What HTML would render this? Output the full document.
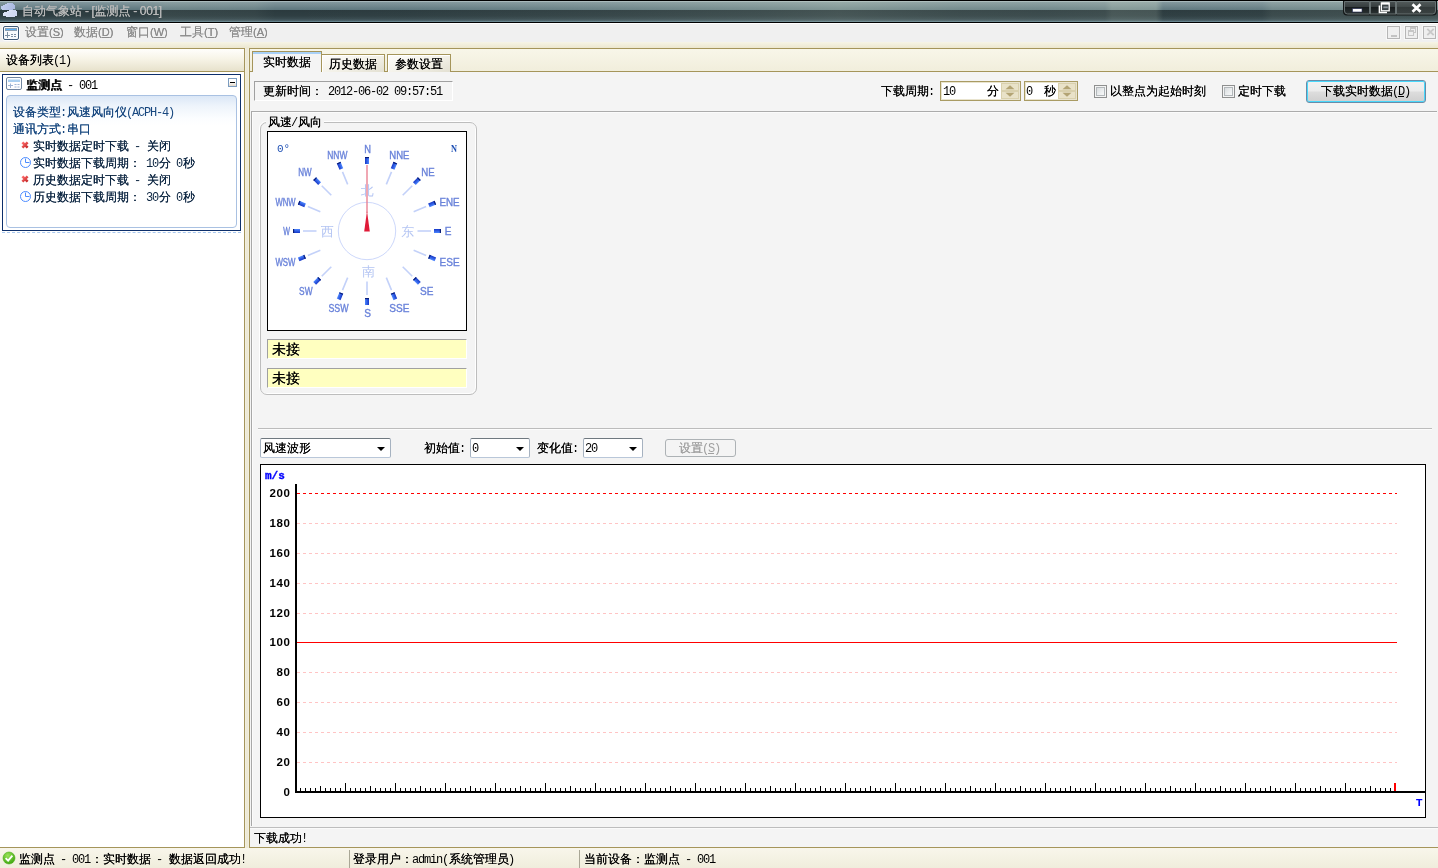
<!DOCTYPE html>
<html lang="zh-CN">
<head>
<meta charset="utf-8">
<title>自动气象站 - [监测点 - 001]</title>
<style>
*{box-sizing:border-box;margin:0;padding:0}
html,body{width:1438px;height:868px;overflow:hidden;background:#f0f0f0}
body{position:relative;will-change:transform;font-family:"Liberation Mono","WenQuanYi Zen Hei","Noto Sans CJK SC",monospace;font-size:12px;line-height:12px;color:#000}
.a{position:absolute}
.t{position:absolute;white-space:pre;height:12px;line-height:12px;margin-top:1px;text-shadow:0 0 0 currentColor}
.l{letter-spacing:-1.2px;margin-left:-1px;margin-right:1px;text-shadow:none}
.b{text-shadow:1px 0 0 currentColor,0 0 0 currentColor}
/* title bar */
#title{left:0;top:0;width:1438px;height:23px;background:
 linear-gradient(to bottom,#000 0,#000 1px,#a6b7bb 1px,#a6b7bb 2px,#82979d 2px,#5d767d 10px,#2b3a3e 10px,#2f3f43 16px,#3a4c51 19px,#4f656c 21px,#67848e 21px,#67848e 22px,#000 22px,#000 23px)}
#title .gl{left:0;top:1px;width:1438px;height:9px;background:linear-gradient(to right,rgba(200,215,195,0) 0px,rgba(200,215,195,0) 140px,rgba(200,215,195,0.13) 165px,rgba(200,215,195,0.1) 255px,rgba(200,215,195,0) 275px,rgba(200,215,195,0.02) 400px,rgba(200,215,195,0.06) 480px,rgba(200,215,195,0.12) 600px,rgba(200,215,195,0.24) 760px,rgba(200,215,195,0.32) 840px,rgba(200,215,195,0.26) 900px,rgba(200,215,195,0.2) 960px,rgba(200,215,195,0.18) 1040px,rgba(200,215,195,0.22) 1105px,rgba(200,215,195,0.36) 1112px,rgba(200,215,195,0.34) 1156px,rgba(200,215,195,0.02) 1163px,rgba(200,215,195,0.05) 1262px,rgba(200,215,195,0.18) 1272px,rgba(200,215,195,0.22) 1340px,rgba(200,215,195,0.22) 1438px)}
#title .gl2{left:0;top:10px;width:1438px;height:12px;opacity:.5;background:linear-gradient(to right,rgba(200,215,195,0) 0px,rgba(200,215,195,0) 140px,rgba(200,215,195,0.13) 165px,rgba(200,215,195,0.1) 255px,rgba(200,215,195,0) 275px,rgba(200,215,195,0.02) 400px,rgba(200,215,195,0.06) 480px,rgba(200,215,195,0.12) 600px,rgba(200,215,195,0.24) 760px,rgba(200,215,195,0.32) 840px,rgba(200,215,195,0.26) 900px,rgba(200,215,195,0.2) 960px,rgba(200,215,195,0.18) 1040px,rgba(200,215,195,0.22) 1105px,rgba(200,215,195,0.36) 1112px,rgba(200,215,195,0.34) 1156px,rgba(200,215,195,0.02) 1163px,rgba(200,215,195,0.05) 1262px,rgba(200,215,195,0.18) 1272px,rgba(200,215,195,0.22) 1340px,rgba(200,215,195,0.22) 1438px)}
#title .tx{left:22px;top:4px;color:#b9b9b9;font-family:"Liberation Sans","WenQuanYi Zen Hei","Noto Sans CJK SC",sans-serif}
#wc{left:1343px;top:1px;width:94px;height:15px}
/* menubar */
#menubar{left:0;top:23px;width:1438px;height:19px;background:#f0f0f0;border-top:1px solid #fff}
#menubar .t{top:1px;color:#8c8c8c;font-family:"Liberation Sans","WenQuanYi Zen Hei","Noto Sans CJK SC",sans-serif}
.ml{font-size:11px}
u{text-decoration:underline;text-underline-offset:1px}
.mdi{top:26px;width:13px;height:13px;border:1px solid #b6b6b6;background:#efefef;box-shadow:0 0 0 1px rgba(255,255,255,.5)}
/* dock area */
#dock{left:0;top:42px;width:1438px;height:806px;background:linear-gradient(to bottom,#f6f4e6 0,#ece7cf 6px,#f8f6e9 7px,#f1eedc 29px,#f3f0e0 30px)}
.gold{background:#a5955a}
/* left panel */
#lhead{left:0;top:49px;width:244px;height:22px;background:linear-gradient(to bottom,#fffefc 0,#f7f4e7 45%,#e7e2cc 100%)}
#llist{left:0;top:72px;width:244px;height:775px;background:#fff}
#dev{left:2px;top:74px;width:239px;height:157px;border:1px solid #0d2f6b;background:#fff}
#devin{left:3px;top:20px;width:231px;height:133px;border:1px solid #a9c1e2;border-radius:4px;background:linear-gradient(to bottom,#dbe7f6 0,#eef4fb 10px,#fbfdff 22px,#fff 30px)}
#devin .t{color:#17477f}
#devin .k{color:#0c2541}
/* right panel */
#rp{left:249px;top:49px;width:1189px;height:798px}
#rcont{left:250px;top:72px;width:1188px;height:775px;background:#f4f4f4}
.tab{top:54px;height:18px;border:1px solid #a5955a;border-bottom:none;background:linear-gradient(160deg,#fdfcfa 0,#f3f1e8 55%,#e3e0d2 100%);box-shadow:inset 1px 1px 0 #fff}
.sunk{border:1px solid;border-color:#a0a0a0 #fff #fff #a0a0a0}
.spin{top:81px;height:20px;border:1px solid #a99b63;background:#fff;box-shadow:inset 0 0 0 1px #e9e4cf}
.cb{top:85px;width:13px;height:13px;border:1px solid #8e8f8f;background:linear-gradient(135deg,#cfd3d6 0,#eef0f1 60%,#fff 100%);box-shadow:inset 0 0 0 1px #f4f4f4, inset 0 0 0 2px #b3b8bb}
.combo{top:438px;height:20px;border:1px solid;border-color:#6f787f #a6b2c0 #b9c7d9 #a6b2c0;border-radius:2px;background:#fff}
.combo:after{content:"";position:absolute;right:5px;top:8px;border:4px solid transparent;border-top:4px solid #000;border-bottom:none}
/* status */
#status{left:0;top:848px;width:1438px;height:20px;background:linear-gradient(to bottom,#f8f6eb,#f0eddc)}
</style>
</head>
<body>
<!-- TITLE BAR -->
<div id="title" class="a">
 <div class="a gl"></div><div class="a gl2"></div>
 <svg class="a" style="left:0;top:0" width="20" height="20" viewBox="0 0 20 20"><defs><linearGradient id="c1" x1="0" y1="0" x2="1" y2="1"><stop offset="0" stop-color="#cbd6f3"/><stop offset="1" stop-color="#9fb0dc"/></linearGradient><linearGradient id="c2" x1="0" y1="0" x2="1" y2="1"><stop offset="0" stop-color="#e6ebfa"/><stop offset="1" stop-color="#c6d0ee"/></linearGradient></defs><g fill="url(#c1)"><rect x="7" y="3" width="6" height="1"/><rect x="5" y="4" width="9" height="1"/><rect x="3" y="5" width="12" height="1"/><rect x="1" y="6" width="14" height="1"/><rect x="1" y="7" width="14" height="1"/><rect x="1" y="8" width="14" height="1"/><rect x="2" y="9" width="11" height="1"/></g><g fill="url(#c2)"><rect x="9" y="10" width="7" height="1"/><rect x="7" y="11" width="10" height="1"/><rect x="4" y="12" width="13" height="1"/><rect x="3" y="13" width="14" height="1"/><rect x="3" y="14" width="14" height="1"/><rect x="3" y="15" width="14" height="1"/><rect x="6" y="16" width="9" height="1"/></g></svg>
 <div class="t tx">自动气象站<span style="letter-spacing:-.4px"> - [</span>监测点<span style="letter-spacing:-.4px"> - 001]</span></div>
 <div id="wc" class="a">
  <svg class="a" style="left:0;top:0" width="94" height="15" viewBox="0 0 94 15">
   <defs><linearGradient id="wb" x1="0" y1="0" x2="0" y2="1"><stop offset="0" stop-color="#4a5253"/><stop offset=".42" stop-color="#363d3e"/><stop offset=".42" stop-color="#161b1c"/><stop offset="1" stop-color="#2b3233"/></linearGradient>
   <linearGradient id="wx" x1="0" y1="0" x2="0" y2="1"><stop offset="0" stop-color="#525a5a"/><stop offset=".42" stop-color="#424a4a"/><stop offset=".42" stop-color="#333a3a"/><stop offset="1" stop-color="#3a4141"/></linearGradient></defs>
   <path d="M0 0H94V10.5Q94 14.500 90 14.500H4Q0 14.500 0 10.5Z" fill="#141819"/>
   <path d="M1.5 0.5H26.5V13H4.5Q1.5 13 1.5 10Z" fill="url(#wb)" stroke="#687273"/>
   <rect x="27.5" y="0.5" width="25" height="12.5" fill="url(#wb)" stroke="#687273"/>
   <path d="M53.500 0.5H92.500V10Q92.500 13 89.500 13H53.500Z" fill="url(#wx)" stroke="#687273"/>
   <rect x="9.500" y="7.700" width="9.500" height="3.300" fill="#fff" stroke="#2a3158" stroke-width=".6"/>
   <rect x="38.400" y="2" width="7.800" height="7.800" fill="#3a4346" stroke="#fff" stroke-width="1.300"/>
   <rect x="38.400" y="1.600" width="7.800" height="2" fill="#fff"/>
   <rect x="40.300" y="5.400" width="4.500" height="1.800" fill="#8d959b"/>
   <path d="M36.400 4.500V11.400H44" fill="none" stroke="#fff" stroke-width="1.500"/>
   <path d="M69.500 3.300 L77.500 10.800 M77.500 3.300 L69.500 10.800" stroke="#fff" stroke-width="2.700"/>
  </svg>
</div>
</div>
<!-- MENU BAR -->
<div id="menubar" class="a">
 <svg class="a" style="left:2px;top:1px" width="18" height="16" viewBox="-1 -1 18 16">
  <rect x="-0.5" y="-0.5" width="17" height="15" rx="2.5" fill="none" stroke="#fff" stroke-opacity=".8"/>
  <rect x="0.5" y="0.5" width="15" height="13" rx="1.500" fill="#f7fafd" stroke="#3f5a78"/>
  <rect x="2.500" y="2.500" width="11" height="2" fill="#5ab0f8" stroke="#8a9fb3"/>
  <path d="M4.500 6V12M2 9.500H7" stroke="#7d8fa3" stroke-width="1"/>
  <path d="M8 8.500H10M11 8.500H13M8 10.500H10M11 10.500H13" stroke="#7d8fa3" stroke-width="1"/>
 </svg>
 <div class="t" style="left:25px">设置<span class="ml">(<u>S</u>)</span></div>
 <div class="t" style="left:74px">数据<span class="ml">(<u>D</u>)</span></div>
 <div class="t" style="left:126px">窗口<span class="ml">(<u>W</u>)</span></div>
 <div class="t" style="left:180px">工具<span class="ml">(<u>T</u>)</span></div>
 <div class="t" style="left:229px">管理<span class="ml">(<u>A</u>)</span></div>
</div>
<div class="a mdi" style="left:1387px"><div class="a" style="left:3px;top:8px;width:6px;height:2px;background:#c3c3c3"></div></div>
<div class="a mdi" style="left:1405px"><div class="a" style="left:4px;top:0;width:6px;height:6px;border:1px solid #c6c6c6;border-top-width:2px"></div><div class="a" style="left:2px;top:3px;width:6px;height:6px;border:1px solid #c6c6c6;border-top-width:2px;background:#efefef"></div></div>
<div class="a mdi" style="left:1423px"><svg class="a" style="left:0;top:0" width="11" height="11"><path d="M3.300 1.800 L9.700 8.200 M9.700 1.800 L3.300 8.200" stroke="#c9c9c9" stroke-width="1.900"/></svg></div>

<!-- DOCK BACKGROUND -->
<div id="dock" class="a"></div>
<div class="a gold" style="left:0;top:48px;width:245px;height:1px"></div>
<div class="a gold" style="left:249px;top:48px;width:1189px;height:1px"></div>
<div class="a gold" style="left:0;top:71px;width:245px;height:1px"></div>
<div class="a gold" style="left:249px;top:71px;width:1189px;height:1px"></div>

<div class="a" style="left:245px;top:48px;width:4px;height:800px;background:linear-gradient(to right,#f4f1e2,#ebe7d3 50%,#f4f1e2)"></div>
<!-- LEFT PANEL -->
<div id="lhead" class="a"><div class="t" style="left:6px;top:5px">设备列表<span class="l">(1)</span></div></div>
<div id="llist" class="a"></div>
<div class="a gold" style="left:244px;top:49px;width:1px;height:799px"></div>
<div id="dev" class="a">
 <svg class="a" style="left:3px;top:2px" width="16" height="14" viewBox="0 0 16 14">
  <rect x="0.5" y="0.5" width="15" height="12" rx="1.5" fill="#fdfeff" stroke="#71859f"/>
  <rect x="2" y="2.5" width="12" height="2.5" fill="#a9cff0"/>
  <path d="M2 8.5h5M4.5 6.5v4.5" stroke="#9fb4d4" stroke-width="1"/>
  <path d="M8.5 7.5h2M11.5 7.5h2M8.5 10h2M11.5 10h2" stroke="#9fb4d4" stroke-width="1"/>
 </svg>
 <div class="t" style="left:23px;top:4px"><span class="b">监测点</span><span class="l"> - 001</span></div>
 <div class="a" style="left:225px;top:3px;width:9px;height:9px;border:1px solid #7b9cc0;background:linear-gradient(#fff 40%,#e2d8ca)"><div class="a" style="left:1px;top:3px;width:5px;height:1px;background:#000"></div></div>
 <div id="devin" class="a">
  <div class="t" style="left:6px;top:10px">设备类型<span class="l">:</span>风速风向仪<span class="l">(ACPH-4)</span></div>
  <div class="t" style="left:6px;top:27px">通讯方式<span class="l">:</span>串口</div>
  <div class="t k" style="left:26px;top:44px">实时数据定时下载<span class="l"> - </span>关闭</div>
  <div class="t k" style="left:26px;top:61px">实时数据下载周期：<span class="l"> 10</span>分<span class="l"> 0</span>秒</div>
  <div class="t k" style="left:26px;top:78px">历史数据定时下载<span class="l"> - </span>关闭</div>
  <div class="t k" style="left:26px;top:95px">历史数据下载周期：<span class="l"> 30</span>分<span class="l"> 0</span>秒</div>
  <svg class="a" style="left:14px;top:45px" width="9" height="9"><defs><linearGradient id="xr" x1="0" y1="0" x2="1" y2="1"><stop offset="0" stop-color="#ff7070"/><stop offset="1" stop-color="#c42626"/></linearGradient></defs><path d="M1.400 1.400 L6.600 6.600 M6.600 1.400 L1.400 6.600" stroke="url(#xr)" stroke-width="2.600"/></svg>
  <svg class="a" style="left:14px;top:79px" width="9" height="9"><path d="M1.400 1.400 L6.600 6.600 M6.600 1.400 L1.400 6.600" stroke="url(#xr)" stroke-width="2.600"/></svg>
  <svg class="a" style="left:13px;top:61px" width="12" height="12"><circle cx="5.500" cy="5.500" r="5" fill="#fff" stroke="#4d8cff" stroke-width="1"/><path d="M5.500 1.500V5.500H9.500" fill="none" stroke="#4d8cff" stroke-width="1"/></svg>
  <svg class="a" style="left:13px;top:95px" width="12" height="12"><circle cx="5.500" cy="5.500" r="5" fill="#fff" stroke="#4d8cff" stroke-width="1"/><path d="M5.500 1.500V5.500H9.500" fill="none" stroke="#4d8cff" stroke-width="1"/></svg>
 </div>
</div>
<div class="a" style="left:2px;top:232px;width:239px;height:0;border-top:1px dashed #a9c8ee"></div>

<!-- RIGHT PANEL -->
<div class="a gold" style="left:249px;top:49px;width:1px;height:799px"></div>
<div id="rcont" class="a"></div>
<!--TABS-->
<div class="a tab" style="left:321px;width:64px"></div>
<div class="a tab" style="left:387px;width:64px"></div>
<div class="a" style="left:252px;top:51px;width:70px;height:21px;border:1px solid #a5955a;border-bottom:none;background:#f4f4f4;box-shadow:inset 0 2px 0 #a9d1f7"></div>
<div class="t" style="left:263px;top:56px">实时数据</div>
<div class="t" style="left:329px;top:58px">历史数据</div>
<div class="t" style="left:395px;top:58px">参数设置</div>
<!--RCONTENT-->
<div class="a sunk" style="left:254px;top:81px;width:199px;height:20px"></div>
<div class="t" style="left:263px;top:85px">更新时间：<span class="l"> 2012-06-02 09:57:51</span></div>
<div class="t" style="left:881px;top:85px">下载周期<span class="l">:</span></div>
<div class="a spin" style="left:940px;width:81px"><div class="t" style="left:3px;top:3px"><span class="l">10</span></div><div class="t" style="left:46px;top:3px">分</div></div>
<div class="a spin" style="left:1024px;width:54px"><div class="t" style="left:2px;top:3px"><span class="l">0</span></div><div class="t" style="left:19px;top:3px">秒</div></div>
<svg class="a" style="left:1001px;top:83px" width="18" height="16" viewBox="0 0 18 16"><rect width="18" height="16" fill="#ece6cf"/><rect x=".5" y=".5" width="17" height="7" fill="#e9e2c8" stroke="#d9d0ad"/><rect x=".5" y="8.5" width="17" height="7" fill="#e9e2c8" stroke="#d9d0ad"/><path d="M4.500 6.300 L9 2.200 L13.500 6.300Z M4.500 9.700 L9 13.800 L13.500 9.700Z" fill="#b3a474"/></svg>
<svg class="a" style="left:1058px;top:83px" width="18" height="16" viewBox="0 0 18 16"><rect width="18" height="16" fill="#ece6cf"/><rect x=".5" y=".5" width="17" height="7" fill="#e9e2c8" stroke="#d9d0ad"/><rect x=".5" y="8.5" width="17" height="7" fill="#e9e2c8" stroke="#d9d0ad"/><path d="M4.500 6.300 L9 2.200 L13.500 6.300Z M4.500 9.700 L9 13.800 L13.500 9.700Z" fill="#b3a474"/></svg>
<div class="a cb" style="left:1094px"></div>
<div class="t" style="left:1110px;top:85px">以整点为起始时刻</div>
<div class="a cb" style="left:1222px"></div>
<div class="t" style="left:1238px;top:85px">定时下载</div>
<div class="a" style="left:1306px;top:80px;width:120px;height:23px;border:1px solid #6a8ca8;border-radius:3px;background:linear-gradient(to bottom,#f2f2f2 0,#ebebeb 48%,#dddddd 52%,#cfcfcf 100%);box-shadow:inset 0 0 0 1px #48d8fb"></div>
<div class="t" style="left:1321px;top:85px">下载实时数据<span class="l">(<u>D</u>)</span></div>
<!-- inner sunken panel -->
<div class="a" style="left:252px;top:112px;width:1185px;height:1px;background:#fbfbfb"></div>
<div class="a" style="left:252px;top:112px;width:1px;height:714px;background:#fbfbfb"></div>
<div class="a" style="left:251px;top:111px;width:1186px;height:1px;background:#ababab"></div>
<div class="a" style="left:251px;top:111px;width:1px;height:715px;background:#a8a8a8"></div>
<div class="a" style="left:250px;top:827px;width:1188px;height:1px;background:#bdbdbd"></div>
<div class="a" style="left:250px;top:828px;width:1188px;height:1px;background:#fafafa"></div>
<div class="a" style="left:258px;top:428px;width:1174px;height:1px;background:#bcbcbc"></div>
<div class="a" style="left:258px;top:429px;width:1174px;height:1px;background:#fcfcfc"></div>
<!-- group box -->
<div class="a" style="left:259px;top:121px;width:217px;height:273px;border:1px solid #fff;border-radius:7px"></div>
<div class="a" style="left:260px;top:122px;width:217px;height:273px;border:1px solid #bdbdbd;border-radius:7px"></div>
<div class="t" style="left:266px;top:116px;background:#f4f4f4;padding:0 2px;width:58px">风速<span class="l">/</span>风向</div>
<!--COMPASS-->
<svg class="a" style="left:267px;top:131px" width="200" height="200" viewBox="0 0 200 200" font-family="'Liberation Sans','WenQuanYi Zen Hei',sans-serif"><defs><linearGradient id="mk" x1="0" y1="0" x2="1" y2="0"><stop offset="0" stop-color="#1638c8"/><stop offset="1" stop-color="#4c86ff"/></linearGradient></defs><rect x=".5" y=".5" width="199" height="199" fill="#fff" stroke="#000"/><circle cx="100" cy="100" r="28.7" fill="none" stroke="#cdd8fb" stroke-width="1"/><g transform="rotate(0 100 100)"><rect x="98" y="26" width="4" height="7" fill="url(#mk)"/><rect x="98" y="26" width="4" height="1.2" fill="#0a1e78"/></g><text x="100.5" y="22.2" text-anchor="middle" font-size="11" fill="#6a83da" stroke="#6a83da" stroke-width=".4" textLength="6.7" lengthAdjust="spacingAndGlyphs">N</text><g transform="rotate(22.5 100 100)"><line x1="100" y1="36" x2="100" y2="49.5" stroke="#c3d1f9" stroke-width="1.6"/><rect x="98" y="26" width="4" height="7" fill="url(#mk)"/><rect x="98" y="26" width="4" height="1.2" fill="#0a1e78"/></g><text x="132.4" y="27.6" text-anchor="middle" font-size="11" fill="#6a83da" stroke="#6a83da" stroke-width=".4" textLength="20.1" lengthAdjust="spacingAndGlyphs">NNE</text><g transform="rotate(45 100 100)"><line x1="100" y1="36" x2="100" y2="49.5" stroke="#c3d1f9" stroke-width="1.6"/><rect x="98" y="26" width="4" height="7" fill="url(#mk)"/><rect x="98" y="26" width="4" height="1.2" fill="#0a1e78"/></g><text x="160.9" y="45.4" text-anchor="middle" font-size="11" fill="#6a83da" stroke="#6a83da" stroke-width=".4" textLength="13.4" lengthAdjust="spacingAndGlyphs">NE</text><g transform="rotate(67.5 100 100)"><line x1="100" y1="36" x2="100" y2="49.5" stroke="#c3d1f9" stroke-width="1.6"/><rect x="98" y="26" width="4" height="7" fill="url(#mk)"/><rect x="98" y="26" width="4" height="1.2" fill="#0a1e78"/></g><text x="182.6" y="74.5" text-anchor="middle" font-size="11" fill="#6a83da" stroke="#6a83da" stroke-width=".4" textLength="20.1" lengthAdjust="spacingAndGlyphs">ENE</text><g transform="rotate(90 100 100)"><line x1="100" y1="36" x2="100" y2="49.5" stroke="#c3d1f9" stroke-width="1.6"/><rect x="98" y="26" width="4" height="7" fill="url(#mk)"/><rect x="98" y="26" width="4" height="1.2" fill="#0a1e78"/></g><text x="181.2" y="104.0" text-anchor="middle" font-size="11" fill="#6a83da" stroke="#6a83da" stroke-width=".4" textLength="6.7" lengthAdjust="spacingAndGlyphs">E</text><g transform="rotate(112.5 100 100)"><line x1="100" y1="36" x2="100" y2="49.5" stroke="#c3d1f9" stroke-width="1.6"/><rect x="98" y="26" width="4" height="7" fill="url(#mk)"/><rect x="98" y="31.8" width="4" height="1.2" fill="#0a1e78"/></g><text x="182.6" y="135.2" text-anchor="middle" font-size="11" fill="#6a83da" stroke="#6a83da" stroke-width=".4" textLength="20.1" lengthAdjust="spacingAndGlyphs">ESE</text><g transform="rotate(135 100 100)"><line x1="100" y1="36" x2="100" y2="49.5" stroke="#c3d1f9" stroke-width="1.6"/><rect x="98" y="26" width="4" height="7" fill="url(#mk)"/><rect x="98" y="31.8" width="4" height="1.2" fill="#0a1e78"/></g><text x="159.8" y="164.3" text-anchor="middle" font-size="11" fill="#6a83da" stroke="#6a83da" stroke-width=".4" textLength="13.4" lengthAdjust="spacingAndGlyphs">SE</text><g transform="rotate(157.5 100 100)"><line x1="100" y1="36" x2="100" y2="49.5" stroke="#c3d1f9" stroke-width="1.6"/><rect x="98" y="26" width="4" height="7" fill="url(#mk)"/><rect x="98" y="31.8" width="4" height="1.2" fill="#0a1e78"/></g><text x="132.4" y="181.3" text-anchor="middle" font-size="11" fill="#6a83da" stroke="#6a83da" stroke-width=".4" textLength="20.1" lengthAdjust="spacingAndGlyphs">SSE</text><g transform="rotate(180 100 100)"><line x1="100" y1="36" x2="100" y2="49.5" stroke="#c3d1f9" stroke-width="1.6"/><rect x="98" y="26" width="4" height="7" fill="url(#mk)"/><rect x="98" y="31.8" width="4" height="1.2" fill="#0a1e78"/></g><text x="100.5" y="186.2" text-anchor="middle" font-size="11" fill="#6a83da" stroke="#6a83da" stroke-width=".4" textLength="6.7" lengthAdjust="spacingAndGlyphs">S</text><g transform="rotate(202.5 100 100)"><line x1="100" y1="36" x2="100" y2="49.5" stroke="#c3d1f9" stroke-width="1.6"/><rect x="98" y="26" width="4" height="7" fill="url(#mk)"/><rect x="98" y="31.8" width="4" height="1.2" fill="#0a1e78"/></g><text x="71.5" y="181.3" text-anchor="middle" font-size="11" fill="#6a83da" stroke="#6a83da" stroke-width=".4" textLength="20.1" lengthAdjust="spacingAndGlyphs">SSW</text><g transform="rotate(225 100 100)"><line x1="100" y1="36" x2="100" y2="49.5" stroke="#c3d1f9" stroke-width="1.6"/><rect x="98" y="26" width="4" height="7" fill="url(#mk)"/><rect x="98" y="31.8" width="4" height="1.2" fill="#0a1e78"/></g><text x="38.8" y="164.3" text-anchor="middle" font-size="11" fill="#6a83da" stroke="#6a83da" stroke-width=".4" textLength="13.4" lengthAdjust="spacingAndGlyphs">SW</text><g transform="rotate(247.5 100 100)"><line x1="100" y1="36" x2="100" y2="49.5" stroke="#c3d1f9" stroke-width="1.6"/><rect x="98" y="26" width="4" height="7" fill="url(#mk)"/><rect x="98" y="31.8" width="4" height="1.2" fill="#0a1e78"/></g><text x="18.5" y="135.2" text-anchor="middle" font-size="11" fill="#6a83da" stroke="#6a83da" stroke-width=".4" textLength="20.1" lengthAdjust="spacingAndGlyphs">WSW</text><g transform="rotate(270 100 100)"><line x1="100" y1="36" x2="100" y2="49.5" stroke="#c3d1f9" stroke-width="1.6"/><rect x="98" y="26" width="4" height="7" fill="url(#mk)"/><rect x="98" y="26" width="4" height="1.2" fill="#0a1e78"/></g><text x="19.6" y="104.0" text-anchor="middle" font-size="11" fill="#6a83da" stroke="#6a83da" stroke-width=".4" textLength="6.7" lengthAdjust="spacingAndGlyphs">W</text><g transform="rotate(292.5 100 100)"><line x1="100" y1="36" x2="100" y2="49.5" stroke="#c3d1f9" stroke-width="1.6"/><rect x="98" y="26" width="4" height="7" fill="url(#mk)"/><rect x="98" y="26" width="4" height="1.2" fill="#0a1e78"/></g><text x="18.5" y="74.5" text-anchor="middle" font-size="11" fill="#6a83da" stroke="#6a83da" stroke-width=".4" textLength="20.1" lengthAdjust="spacingAndGlyphs">WNW</text><g transform="rotate(315 100 100)"><line x1="100" y1="36" x2="100" y2="49.5" stroke="#c3d1f9" stroke-width="1.6"/><rect x="98" y="26" width="4" height="7" fill="url(#mk)"/><rect x="98" y="26" width="4" height="1.2" fill="#0a1e78"/></g><text x="38.0" y="45.4" text-anchor="middle" font-size="11" fill="#6a83da" stroke="#6a83da" stroke-width=".4" textLength="13.4" lengthAdjust="spacingAndGlyphs">NW</text><g transform="rotate(337.5 100 100)"><line x1="100" y1="36" x2="100" y2="49.5" stroke="#c3d1f9" stroke-width="1.6"/><rect x="98" y="26" width="4" height="7" fill="url(#mk)"/><rect x="98" y="26" width="4" height="1.2" fill="#0a1e78"/></g><text x="70.3" y="27.6" text-anchor="middle" font-size="11" fill="#6a83da" stroke="#6a83da" stroke-width=".4" textLength="20.1" lengthAdjust="spacingAndGlyphs">NNW</text><text x="100.2" y="64" text-anchor="middle" font-size="13" fill="#b4c5f3">北</text><text x="101.4" y="145.3" text-anchor="middle" font-size="13" fill="#b4c5f3">南</text><text x="140.8" y="105.2" text-anchor="middle" font-size="13" fill="#b4c5f3">东</text><text x="60.3" y="105.2" text-anchor="middle" font-size="13" fill="#b4c5f3">西</text><line x1="100" y1="34" x2="100" y2="82" stroke="#e8788a" stroke-width="1.3"/><path d="M100 80 L102.8 100.5 L97.2 100.5 Z" fill="#e01a38"/><text x="10" y="21" font-size="11" fill="#1d4fb4" font-family="'Liberation Mono',monospace">0°</text><text x="184" y="20.6" font-size="10" font-weight="bold" fill="#1d4fb4" font-family="'Liberation Serif',serif" textLength="6" lengthAdjust="spacingAndGlyphs">N</text></svg>
<div class="a sunk" style="left:267px;top:339px;width:200px;height:20px;background:#ffffc0"></div>
<div class="t" style="left:272px;top:342px;font-size:14px;height:14px;line-height:14px">未接</div>
<div class="a sunk" style="left:267px;top:368px;width:200px;height:20px;background:#ffffc0"></div>
<div class="t" style="left:272px;top:371px;font-size:14px;height:14px;line-height:14px">未接</div>
<!-- combos -->
<div class="a combo" style="left:260px;width:131px"><div class="t" style="left:2px;top:3px">风速波形</div></div>
<div class="t" style="left:424px;top:442px">初始值<span class="l">:</span></div>
<div class="a combo" style="left:470px;width:60px"><div class="t" style="left:2px;top:3px"><span class="l">0</span></div></div>
<div class="t" style="left:537px;top:442px">变化值<span class="l">:</span></div>
<div class="a combo" style="left:583px;width:60px"><div class="t" style="left:2px;top:3px"><span class="l">20</span></div></div>
<div class="a" style="left:665px;top:439px;width:71px;height:18px;border:1px solid #adb2b5;border-radius:3px;background:#f4f4f4"></div>
<div class="t" style="left:679px;top:442px;color:#a0a0a0">设置<span class="l">(<u>S</u>)</span></div>
<div class="t" style="left:254px;top:832px">下载成功<span class="l">!</span></div>
<!--CHART-->
<svg class="a" style="left:260px;top:464px" width="1166" height="354" viewBox="0 0 1166 354" shape-rendering="crispEdges"><rect x=".5" y=".5" width="1165" height="353" fill="#fff" stroke="#000"/><line x1="37" y1="29.5" x2="1137" y2="29.5" stroke="#ff0000" stroke-width="1" stroke-dasharray="3 3"/><text x="30.5" y="33" text-anchor="end" font-size="11.5" font-weight="bold" letter-spacing=".6" font-family="'Liberation Sans',sans-serif" shape-rendering="auto">200</text><line x1="37" y1="59.5" x2="1137" y2="59.5" stroke="#ffc4c4" stroke-width="1" stroke-dasharray="3 3"/><text x="30.5" y="63" text-anchor="end" font-size="11.5" font-weight="bold" letter-spacing=".6" font-family="'Liberation Sans',sans-serif" shape-rendering="auto">180</text><line x1="37" y1="89.5" x2="1137" y2="89.5" stroke="#ffc4c4" stroke-width="1" stroke-dasharray="3 3"/><text x="30.5" y="93" text-anchor="end" font-size="11.5" font-weight="bold" letter-spacing=".6" font-family="'Liberation Sans',sans-serif" shape-rendering="auto">160</text><line x1="37" y1="119.5" x2="1137" y2="119.5" stroke="#ffc4c4" stroke-width="1" stroke-dasharray="3 3"/><text x="30.5" y="123" text-anchor="end" font-size="11.5" font-weight="bold" letter-spacing=".6" font-family="'Liberation Sans',sans-serif" shape-rendering="auto">140</text><line x1="37" y1="149.5" x2="1137" y2="149.5" stroke="#ffc4c4" stroke-width="1" stroke-dasharray="3 3"/><text x="30.5" y="153" text-anchor="end" font-size="11.5" font-weight="bold" letter-spacing=".6" font-family="'Liberation Sans',sans-serif" shape-rendering="auto">120</text><line x1="37" y1="178.5" x2="1137" y2="178.5" stroke="#ff0000" stroke-width="1"/><text x="30.5" y="182" text-anchor="end" font-size="11.5" font-weight="bold" letter-spacing=".6" font-family="'Liberation Sans',sans-serif" shape-rendering="auto">100</text><line x1="37" y1="208.5" x2="1137" y2="208.5" stroke="#ffc4c4" stroke-width="1" stroke-dasharray="3 3"/><text x="30.5" y="212" text-anchor="end" font-size="11.5" font-weight="bold" letter-spacing=".6" font-family="'Liberation Sans',sans-serif" shape-rendering="auto">80</text><line x1="37" y1="238.5" x2="1137" y2="238.5" stroke="#ffc4c4" stroke-width="1" stroke-dasharray="3 3"/><text x="30.5" y="242" text-anchor="end" font-size="11.5" font-weight="bold" letter-spacing=".6" font-family="'Liberation Sans',sans-serif" shape-rendering="auto">60</text><line x1="37" y1="268.5" x2="1137" y2="268.5" stroke="#ffc4c4" stroke-width="1" stroke-dasharray="3 3"/><text x="30.5" y="272" text-anchor="end" font-size="11.5" font-weight="bold" letter-spacing=".6" font-family="'Liberation Sans',sans-serif" shape-rendering="auto">40</text><line x1="37" y1="298.5" x2="1137" y2="298.5" stroke="#ffc4c4" stroke-width="1" stroke-dasharray="3 3"/><text x="30.5" y="302" text-anchor="end" font-size="11.5" font-weight="bold" letter-spacing=".6" font-family="'Liberation Sans',sans-serif" shape-rendering="auto">20</text><text x="30.5" y="332" text-anchor="end" font-size="11.5" font-weight="bold" letter-spacing=".6" font-family="'Liberation Sans',sans-serif" shape-rendering="auto">0</text><path d="M40.5 327V324M45.5 327V324M50.5 327V324M55.5 327V324M60.5 327V322M65.5 327V324M70.5 327V324M75.5 327V324M80.5 327V324M85.5 327V319M90.5 327V324M95.5 327V324M100.5 327V324M105.5 327V324M110.5 327V322M115.5 327V324M120.5 327V324M125.5 327V324M130.5 327V324M135.5 327V319M140.5 327V324M145.5 327V324M150.5 327V324M155.5 327V324M160.5 327V322M165.5 327V324M170.5 327V324M175.5 327V324M180.5 327V324M185.5 327V319M190.5 327V324M195.5 327V324M200.5 327V324M205.5 327V324M210.5 327V322M215.5 327V324M220.5 327V324M225.5 327V324M230.5 327V324M235.5 327V319M240.5 327V324M245.5 327V324M250.5 327V324M255.5 327V324M260.5 327V322M265.5 327V324M270.5 327V324M275.5 327V324M280.5 327V324M285.5 327V319M290.5 327V324M295.5 327V324M300.5 327V324M305.5 327V324M310.5 327V322M315.5 327V324M320.5 327V324M325.5 327V324M330.5 327V324M335.5 327V319M340.5 327V324M345.5 327V324M350.5 327V324M355.5 327V324M360.5 327V322M365.5 327V324M370.5 327V324M375.5 327V324M380.5 327V324M385.5 327V319M390.5 327V324M395.5 327V324M400.5 327V324M405.5 327V324M410.5 327V322M415.5 327V324M420.5 327V324M425.5 327V324M430.5 327V324M435.5 327V319M440.5 327V324M445.5 327V324M450.5 327V324M455.5 327V324M460.5 327V322M465.5 327V324M470.5 327V324M475.5 327V324M480.5 327V324M485.5 327V319M490.5 327V324M495.5 327V324M500.5 327V324M505.5 327V324M510.5 327V322M515.5 327V324M520.5 327V324M525.5 327V324M530.5 327V324M535.5 327V319M540.5 327V324M545.5 327V324M550.5 327V324M555.5 327V324M560.5 327V322M565.5 327V324M570.5 327V324M575.5 327V324M580.5 327V324M585.5 327V319M590.5 327V324M595.5 327V324M600.5 327V324M605.5 327V324M610.5 327V322M615.5 327V324M620.5 327V324M625.5 327V324M630.5 327V324M635.5 327V319M640.5 327V324M645.5 327V324M650.5 327V324M655.5 327V324M660.5 327V322M665.5 327V324M670.5 327V324M675.5 327V324M680.5 327V324M685.5 327V319M690.5 327V324M695.5 327V324M700.5 327V324M705.5 327V324M710.5 327V322M715.5 327V324M720.5 327V324M725.5 327V324M730.5 327V324M735.5 327V319M740.5 327V324M745.5 327V324M750.5 327V324M755.5 327V324M760.5 327V322M765.5 327V324M770.5 327V324M775.5 327V324M780.5 327V324M785.5 327V319M790.5 327V324M795.5 327V324M800.5 327V324M805.5 327V324M810.5 327V322M815.5 327V324M820.5 327V324M825.5 327V324M830.5 327V324M835.5 327V319M840.5 327V324M845.5 327V324M850.5 327V324M855.5 327V324M860.5 327V322M865.5 327V324M870.5 327V324M875.5 327V324M880.5 327V324M885.5 327V319M890.5 327V324M895.5 327V324M900.5 327V324M905.5 327V324M910.5 327V322M915.5 327V324M920.5 327V324M925.5 327V324M930.5 327V324M935.5 327V319M940.5 327V324M945.5 327V324M950.5 327V324M955.5 327V324M960.5 327V322M965.5 327V324M970.5 327V324M975.5 327V324M980.5 327V324M985.5 327V319M990.5 327V324M995.5 327V324M1000.5 327V324M1005.5 327V324M1010.5 327V322M1015.5 327V324M1020.5 327V324M1025.5 327V324M1030.5 327V324M1035.5 327V319M1040.5 327V324M1045.5 327V324M1050.5 327V324M1055.5 327V324M1060.5 327V322M1065.5 327V324M1070.5 327V324M1075.5 327V324M1080.5 327V324M1085.5 327V319M1090.5 327V324M1095.5 327V324M1100.5 327V324M1105.5 327V324M1110.5 327V322M1115.5 327V324M1120.5 327V324M1125.5 327V324M1130.5 327V324" stroke="#000" stroke-width="1" fill="none"/><rect x="1134" y="319" width="2" height="8" fill="#ff0000"/><rect x="35" y="20" width="2" height="309" fill="#000"/><rect x="35" y="327" width="1130" height="2" fill="#000"/><text x="5" y="15" font-size="11" font-weight="bold" fill="#0000ff" stroke="#0000ff" stroke-width=".35" font-family="'Liberation Mono',monospace">m/s</text><text x="1155.7" y="342" font-size="11.5" font-weight="bold" fill="#0000ff" font-family="'Liberation Mono',monospace">T</text></svg>
<div class="a gold" style="left:0;top:847px;width:245px;height:1px"></div>
<div class="a gold" style="left:249px;top:847px;width:1189px;height:1px"></div>
<!-- STATUS BAR -->
<div id="status" class="a">
 <svg class="a" style="left:2px;top:3px" width="14" height="14" viewBox="0 0 14 14"><defs><radialGradient id="gg" cx="40%" cy="30%" r="75%"><stop offset="0" stop-color="#9be45a"/><stop offset="1" stop-color="#3aa30c"/></radialGradient></defs><circle cx="7" cy="7" r="6" fill="url(#gg)" stroke="#4cae18" stroke-width=".6"/><path d="M3.6 7.2 L6.1 9.6 L10.4 4.6" fill="none" stroke="#fff" stroke-width="1.8"/></svg>
 <div class="t" style="left:19px;top:5px">监测点<span class="l"> - 001</span>：实时数据<span class="l"> - </span>数据返回成功<span class="l">!</span></div>
 <div class="a" style="left:349px;top:2px;width:1px;height:18px;background:#a9a796"></div>
 <div class="t" style="left:353px;top:5px">登录用户：<span class="l">admin(</span>系统管理员<span class="l">)</span></div>
 <div class="a" style="left:579px;top:2px;width:1px;height:18px;background:#a9a796"></div>
 <div class="t" style="left:584px;top:5px">当前设备：监测点<span class="l"> - 001</span></div>
</div>
</body>
</html>
